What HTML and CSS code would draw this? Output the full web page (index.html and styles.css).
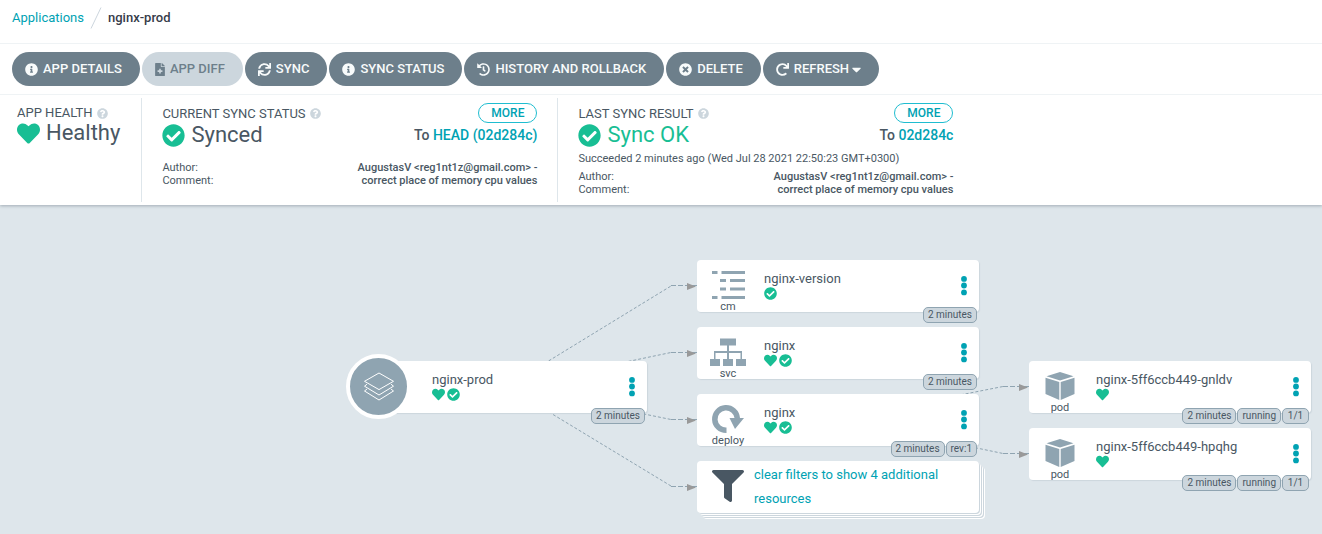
FILE: index.html
```html
<!DOCTYPE html>
<html lang="en">
<head>
<meta charset="utf-8">
<title>nginx-prod</title>
<link rel="stylesheet" href="styles.css">
</head>
<body>
<svg class="sprite" aria-hidden="true">
  <symbol id="info" viewBox="0 0 512 512"><path d="M256 8C119.043 8 8 119.083 8 256c0 136.997 111.043 248 248 248s248-111.003 248-248C504 119.083 392.957 8 256 8zm0 110c23.196 0 42 18.804 42 42s-18.804 42-42 42-42-18.804-42-42 18.804-42 42-42zm56 254c0 6.627-5.373 12-12 12h-88c-6.627 0-12-5.373-12-12v-24c0-6.627 5.373-12 12-12h12v-64h-12c-6.627 0-12-5.373-12-12v-24c0-6.627 5.373-12 12-12h64c6.627 0 12 5.373 12 12v100h12c6.627 0 12 5.373 12 12v24z"/></symbol>
  <symbol id="check" viewBox="0 0 512 512"><path d="M504 256c0 136.967-111.033 248-248 248S8 392.967 8 256 119.033 8 256 8s248 111.033 248 248zM227.314 387.314l184-184c6.248-6.248 6.248-16.379 0-22.627l-22.627-22.627c-6.248-6.249-16.379-6.249-22.628 0L216 308.118l-70.059-70.059c-6.248-6.248-16.379-6.248-22.628 0l-22.627 22.627c-6.248 6.248-6.248 16.379 0 22.627l104 104c6.249 6.249 16.379 6.249 22.628.001z"/></symbol>
  <symbol id="heart" viewBox="0 0 512 512"><path d="M462.3 62.6C407.5 15.9 326 24.3 275.7 76.2L256 96.5l-19.7-20.3C186.1 24.3 104.5 15.9 49.7 62.6c-62.8 53.6-66.1 149.8-9.9 207.9l193.5 199.8c12.5 12.9 32.8 12.9 45.3 0l193.5-199.8c56.3-58.1 53-154.3-9.8-207.9z"/></symbol>
  <symbol id="times" viewBox="0 0 512 512"><path d="M256 8C119 8 8 119 8 256s111 248 248 248 248-111 248-248S393 8 256 8zm121.6 313.1c4.7 4.7 4.7 12.3 0 17L338 377.6c-4.7 4.7-12.3 4.7-17 0L256 312l-65.1 65.6c-4.7 4.7-12.3 4.7-17 0L134.4 338c-4.7-4.7-4.7-12.3 0-17l65.6-65-65.6-65.1c-4.7-4.7-4.7-12.3 0-17l39.6-39.6c4.7-4.7 12.3-4.7 17 0l65 65.7 65.1-65.6c4.7-4.7 12.3-4.7 17 0l39.6 39.6c4.7 4.7 4.7 12.3 0 17L312 256l65.6 65.1z"/></symbol>
  <symbol id="filter" viewBox="0 0 512 512"><path d="M487.976 0H24.028C2.71 0-8.047 25.866 7.058 40.971L192 225.941V432c0 7.831 3.821 15.17 10.237 19.662l80 55.98C298.02 518.69 320 507.493 320 487.98V225.941l184.947-184.97C520.021 25.896 509.338 0 487.976 0z"/></symbol>
  <symbol id="question" viewBox="0 0 512 512"><path d="M504 256c0 136.997-111.043 248-248 248S8 392.997 8 256C8 119.083 119.043 8 256 8s248 111.083 248 248zM262.655 90c-54.497 0-89.255 22.957-116.549 63.758-3.536 5.286-2.353 12.415 2.715 16.258l34.699 26.31c5.205 3.947 12.621 3.008 16.665-2.122 17.864-22.658 30.113-35.797 57.303-35.797 20.429 0 45.698 13.148 45.698 32.958 0 14.976-12.363 22.667-32.534 33.976C247.128 238.528 216 254.941 216 296v4c0 6.627 5.373 12 12 12h56c6.627 0 12-5.373 12-12v-1.333c0-28.462 83.186-29.647 83.186-106.667 0-58.002-60.165-102-116.531-102zM256 338c-25.365 0-46 20.635-46 46 0 25.364 20.635 46 46 46s46-20.636 46-46c0-25.365-20.635-46-46-46z"/></symbol>
  <symbol id="redo" viewBox="0 0 512 512"><path d="M500.33 0h-47.41a12 12 0 0 0-12 12.57l4 82.76A247.42 247.42 0 0 0 256 8C119.34 8 7.9 119.53 8 256.19 8.1 393.07 119.1 504 256 504a247.1 247.1 0 0 0 166.18-63.91 12 12 0 0 0 .48-17.43l-34-34a12 12 0 0 0-16.38-.55A176 176 0 1 1 402.1 157.8l-101.53-4.87a12 12 0 0 0-12.57 12v47.41a12 12 0 0 0 12 12h200.33a12 12 0 0 0 12-12V12a12 12 0 0 0-12-12z"/></symbol>
  <symbol id="sync" viewBox="0 0 512 512"><path d="M440.65 12.57l4 82.77A247.16 247.16 0 0 0 255.83 8C134.73 8 33.91 94.92 12.29 209.82A12 12 0 0 0 24.09 224h49.05a12 12 0 0 0 11.67-9.26 175.91 175.91 0 0 1 317-56.94l-101.46-4.86a12 12 0 0 0-12.57 12v47.41a12 12 0 0 0 12 12H500a12 12 0 0 0 12-12V12a12 12 0 0 0-12-12h-47.37a12 12 0 0 0-11.98 12.57zM255.83 432a175.61 175.61 0 0 1-146-77.8l101.8 4.87a12 12 0 0 0 12.57-12v-47.4a12 12 0 0 0-12-12H12a12 12 0 0 0-12 12V500a12 12 0 0 0 12 12h47.35a12 12 0 0 0 12-12.6l-4.15-82.57A247.17 247.17 0 0 0 255.83 504c121.11 0 221.93-86.92 243.55-201.82a12 12 0 0 0-11.8-14.18h-49.05a12 12 0 0 0-11.67 9.26A175.86 175.86 0 0 1 255.83 432z"/></symbol>
  <symbol id="history" viewBox="0 0 512 512"><path d="M504 255.531c.253 136.64-111.18 248.372-247.82 248.468-59.015.042-113.223-20.53-155.822-54.911-11.077-8.94-11.905-25.541-1.839-35.607l11.267-11.267c8.609-8.609 22.353-9.551 31.891-1.984C173.062 425.135 212.781 440 256 440c101.705 0 184-82.311 184-184 0-101.705-82.311-184-184-184-48.814 0-93.149 18.969-126.068 49.932l50.754 50.754c10.08 10.08 2.941 27.314-11.313 27.314H24c-8.837 0-16-7.163-16-16V38.627c0-14.254 17.234-21.393 27.314-11.314l49.372 49.372C129.209 34.136 189.552 8 256 8c136.81 0 247.747 110.78 248 247.531zm-180.912 78.784l9.823-12.63c8.138-10.463 6.253-25.542-4.21-33.679L288 256.349V152c0-13.255-10.745-24-24-24h-16c-13.255 0-24 10.745-24 24v135.651l65.409 50.874c10.463 8.137 25.541 6.253 33.679-4.21z"/></symbol>
  <symbol id="file" viewBox="0 0 384 512"><path d="M377 105L279.1 7c-4.5-4.5-10.6-7-17-7H256v128h128v-6.1c0-6.3-2.5-12.4-7-16.9zm-153 31V0H24C10.7 0 0 10.7 0 24v464c0 13.3 10.7 24 24 24h336c13.3 0 24-10.7 24-24V160H248c-13.2 0-24-10.8-24-24zm64 160v48c0 4.4-3.6 8-8 8h-56v56c0 4.4-3.6 8-8 8h-48c-4.4 0-8-3.6-8-8v-56h-56c-4.4 0-8-3.6-8-8v-48c0-4.4 3.6-8 8-8h56v-56c0-4.4 3.6-8 8-8h48c4.4 0 8 3.6 8 8v56h56c4.4 0 8 3.6 8 8z"/></symbol>
  <symbol id="caret" viewBox="0 0 320 512"><path d="M31.3 192h257.3c17.8 0 26.7 21.5 14.1 34.1L174.1 354.8c-7.8 7.8-20.5 7.8-28.3 0L17.2 226.1C4.6 213.5 13.5 192 31.3 192z"/></symbol>
  <symbol id="dots" viewBox="0 0 6 20"><circle cx="3" cy="2.9" r="2.9"/><circle cx="3" cy="9.5" r="2.9"/><circle cx="3" cy="16.4" r="2.9"/></symbol>
  <symbol id="pod" viewBox="0 0 36 34"><path d="M18 4L31.5 8.200 18 12.500 4.500 8.200zM3.500 9.700L17.300 14V32L3.500 26zM32.500 9.700L18.700 14V32L32.500 26z"/></symbol>
</svg>

<header class="header">
  <nav class="breadcrumb" aria-label="Breadcrumb">
    <a class="link" href="#">Applications</a>
    <svg class="slash" viewBox="0 0 12 22" aria-hidden="true"><path d="M1 21.5L11 .5"/></svg>
    <span class="current">nginx-prod</span>
  </nav>
  <div class="toolbar">
    <button class="btn"><svg class="icon"><use href="#info"/></svg>App details</button>
    <button class="btn" disabled><svg class="icon narrow"><use href="#file"/></svg>App diff</button>
    <button class="btn"><svg class="icon"><use href="#sync"/></svg>Sync</button>
    <button class="btn"><svg class="icon"><use href="#info"/></svg>Sync status</button>
    <button class="btn"><svg class="icon"><use href="#history"/></svg>History and rollback</button>
    <button class="btn"><svg class="icon"><use href="#times"/></svg>Delete</button>
    <button class="btn"><svg class="icon"><use href="#redo"/></svg>Refresh<svg class="icon caret"><use href="#caret"/></svg></button>
  </div>
  <div class="summary">
    <section class="panel health">
      <div class="label">App health <svg class="help"><use href="#question"/></svg></div>
      <div class="status"><svg class="state"><use href="#heart"/></svg>Healthy</div>
    </section>
    <section class="panel wide">
      <div class="row">
        <div class="label">Current sync status <svg class="help"><use href="#question"/></svg></div>
        <button class="more">More</button>
      </div>
      <div class="row">
        <div class="status"><svg class="state"><use href="#check"/></svg>Synced</div>
        <div class="revision">To <a class="link" href="#">HEAD (02d284c)</a></div>
      </div>
      <div class="note"></div>
      <dl class="commit">
        <div class="row"><dt>Author:</dt><dd>AugustasV &lt;reg1nt1z@gmail.com&gt; -</dd></div>
        <div class="row"><dt>Comment:</dt><dd>correct place of memory cpu values</dd></div>
      </dl>
    </section>
    <section class="panel wide">
      <div class="row">
        <div class="label">Last sync result <svg class="help"><use href="#question"/></svg></div>
        <button class="more">More</button>
      </div>
      <div class="row">
        <div class="status ok"><svg class="state"><use href="#check"/></svg>Sync OK</div>
        <div class="revision">To <a class="link" href="#">02d284c</a></div>
      </div>
      <div class="note result">Succeeded 2 minutes ago (Wed Jul 28 2021 22:50:23 GMT+0300)</div>
      <dl class="commit">
        <div class="row"><dt>Author:</dt><dd>AugustasV &lt;reg1nt1z@gmail.com&gt; -</dd></div>
        <div class="row"><dt>Comment:</dt><dd>correct place of memory cpu values</dd></div>
      </dl>
    </section>
  </div>
</header>

<main class="canvas">
  <svg class="edges" aria-hidden="true">
    <g class="lines">
      <path d="M506 182L671 81M506 182L671 147.500M506 181L671 214.500M506 181L671 281M838 214L1003 181.500M838 214L1003 248.500"/>
      <path class="flat" d="M671 80.500H697M671 147.500H697M671 214.500H697M671 281.500H697M1003 181.500H1029M1003 248.500H1029"/>
    </g>
    <path class="arrows" d="M687 78l9 3.500-9 3.500zM687 145l9 3.500-9 3.500zM687 212l9 3.500-9 3.500zM687 279l9 3.500-9 3.500zM1019 179l9 3.500-9 3.500zM1019 246l9 3.500-9 3.500z"/>
  </svg>

  <article class="node app">
    <div class="app-icon"><svg viewBox="0 0 30 30"><path d="M15 1L29.500 9.300 15 17.600 .5 9.300zM3 12.200L.5 14.200 15 23 29.500 14.200 27 12.200M3 17L.5 19 15 28 29.500 19 27 17"/></svg></div>
    <div class="kind"></div>
    <div class="body"><div class="name">nginx-prod</div><div class="states"><svg><use href="#heart"/></svg><svg><use href="#check"/></svg></div></div>
    <button class="menu" aria-label="Actions for nginx-prod"><svg><use href="#dots"/></svg></button>
    <div class="tags"><span>2 minutes</span></div>
  </article>

  <article class="node cm">
    <div class="kind"><svg viewBox="0 0 36 34"><path d="M2 4h5.500v3H2zM11.500 4H35v3H11.500zM10 12h6v3h-6zM20 12h15v3H20zM10 20.500h6v3h-6zM20 20.500h15v3H20zM2 29h5.500v3H2zM11.500 29H35v3H11.500z"/></svg>cm</div>
    <div class="body"><div class="name">nginx-version</div><div class="states"><svg><use href="#check"/></svg></div></div>
    <button class="menu" aria-label="Actions for nginx-version"><svg><use href="#dots"/></svg></button>
    <div class="tags"><span>2 minutes</span></div>
  </article>

  <article class="node svc">
    <div class="kind"><svg viewBox="0 0 36 34"><path d="M10 4.500h16V11.500h-7v5.500h13v8h4v7H26v-7h4.500v-6H19v6h4v7H13v-7h4v-6H5.500v6H10v7H0v-7h4v-8h13v-5.500h-7z"/></svg>svc</div>
    <div class="body"><div class="name">nginx</div><div class="states"><svg><use href="#heart"/></svg><svg><use href="#check"/></svg></div></div>
    <button class="menu" aria-label="Actions for service nginx"><svg><use href="#dots"/></svg></button>
    <div class="tags"><span>2 minutes</span></div>
  </article>

  <article class="node deploy">
    <div class="kind"><svg viewBox="0 0 36 34"><path d="M16.500 32A14 14 0 1 1 30 17h4L25 28 19.500 17h5A8.500 8.500 0 1 0 16.500 26.500z"/></svg>deploy</div>
    <div class="body"><div class="name">nginx</div><div class="states"><svg><use href="#heart"/></svg><svg><use href="#check"/></svg></div></div>
    <button class="menu" aria-label="Actions for deployment nginx"><svg><use href="#dots"/></svg></button>
    <div class="tags"><span>2 minutes</span><span>rev:1</span></div>
  </article>

  <article class="node filtered">
    <svg class="funnel"><use href="#filter"/></svg>
    <a class="link" href="#">clear filters to show 4 additional resources</a>
  </article>

  <article class="node pod-a">
    <div class="kind"><svg><use href="#pod"/></svg>pod</div>
    <div class="body"><div class="name">nginx-5ff6ccb449-gnldv</div><div class="states"><svg><use href="#heart"/></svg></div></div>
    <button class="menu" aria-label="Actions for nginx-5ff6ccb449-gnldv"><svg><use href="#dots"/></svg></button>
    <div class="tags"><span>2 minutes</span><span>running</span><span>1/1</span></div>
  </article>

  <article class="node pod-b">
    <div class="kind"><svg><use href="#pod"/></svg>pod</div>
    <div class="body"><div class="name">nginx-5ff6ccb449-hpqhg</div><div class="states"><svg><use href="#heart"/></svg></div></div>
    <button class="menu" aria-label="Actions for nginx-5ff6ccb449-hpqhg"><svg><use href="#dots"/></svg></button>
    <div class="tags"><span>2 minutes</span><span>running</span><span>1/1</span></div>
  </article>
</main>
</body>
</html>
```

FILE: styles.css
```css
* { box-sizing: border-box; }

body {
  margin: 0;
  min-height: 100vh;
  display: flex;
  flex-direction: column;
  background: #dee6eb;
  color: #495763;
  font: 13px/18px Roboto, sans-serif;
}

button { font: inherit; cursor: pointer; }
svg { display: block; flex: none; fill: currentColor; }
.sprite { position: absolute; width: 0; height: 0; }
.link { color: #00a2b3; text-decoration: none; }

/* Header */
.header {
  position: relative;
  z-index: 1;
  background: #fff;
  box-shadow: 0 1px 3px rgba(73, 87, 99, 0.4);
}
.breadcrumb {
  display: flex;
  align-items: center;
  height: 43px;
  padding: 0 12px 7px;
}
.slash {
  width: 12px;
  height: 22px;
  margin: 0 6px;
  fill: none;
  stroke: #ccd6dd;
}
.current { color: #363c4a; font-weight: 500; }

.toolbar {
  display: flex;
  flex-wrap: wrap;
  gap: 2px;
  padding: 8px 12px;
  border: solid #eff3f5;
  border-width: 1px 0;
}
.btn {
  display: flex;
  align-items: center;
  height: 34px;
  padding: 0 18px 0 13px;
  border: 0;
  border-radius: 17px;
  background: #6d7f8b;
  color: #f8fbfb;
  font-weight: 500;
  text-transform: uppercase;
}
.btn:disabled { background: #ccd6dd; color: #6d7f8b; }
.icon { width: 13px; height: 13px; margin-right: 5px; }
.icon.narrow { width: 10px; }
.icon.caret { width: 9px; height: 15px; margin: 0 0 0 3px; }

/* Summary */
.summary { display: flex; padding: 3px 0; }
.panel { min-height: 104px; }
.panel + .panel { border-left: 1px solid #dee6eb; }
.health { padding: 6px 21px 0 17px; }
.wide { flex: 0 1 416px; padding: 5px 20px 0; }
.row { display: flex; justify-content: space-between; }
.label {
  display: flex;
  align-items: center;
  gap: 4px;
  height: 18px;
  text-transform: uppercase;
}
.wide .label { height: 21px; }
.help { width: 11px; height: 11px; color: #ccd6dd; }
.status {
  display: flex;
  align-items: center;
  gap: 6px;
  height: 22px;
  font-size: 22px;
  line-height: 22px;
}
.state { width: 23px; height: 23px; color: #18be94; }
.ok { color: #18be94; }
.more {
  height: 20px;
  padding: 0 12px;
  border: 1px solid #1fbdd0;
  border-radius: 10px;
  background: none;
  color: #00a2b3;
  font-size: 12px;
  font-weight: 500;
  line-height: 18px;
  text-transform: uppercase;
}
.revision { font-size: 14px; line-height: 22px; font-weight: 500; }
.note { height: 15px; font-size: 11px; line-height: 26px; }
.note.result { height: 24px; }
.commit { margin: 0; font-size: 11px; line-height: 13px; }
.commit dd { margin: 0; font-weight: 500; text-align: right; }

/* Resource tree */
.canvas { position: relative; flex: 1; min-height: 329px; }
.edges { position: absolute; inset: 0; width: 100%; height: 100%; }
.lines { fill: none; stroke: #8fa4b1; stroke-dasharray: 3 2; stroke-width: 1; }
.flat { stroke-dasharray: 5 2; }
.arrows { fill: #999; }

.node {
  position: absolute;
  display: flex;
  width: 282px;
  height: 52px;
  border-radius: 4px;
  background: #fff;
  box-shadow: 1px 1px 1px #ccd6dd;
}
.app { left: 365px; top: 156px; }
.cm { left: 697px; top: 55px; }
.svc { left: 697px; top: 122px; }
.deploy { left: 697px; top: 189px; }
.filtered { left: 697px; top: 256px; }
.pod-a { left: 1029px; top: 156px; }
.pod-b { left: 1029px; top: 223px; }

.app-icon {
  position: absolute;
  left: -19px;
  top: -7px;
  display: grid;
  place-items: center;
  width: 65px;
  height: 65px;
  border: 4px solid #fff;
  border-radius: 50%;
  background: #8fa4b1;
}
.app-icon svg { width: 30px; height: 30px; fill: none; stroke: #fff; }

.kind {
  display: flex;
  flex-direction: column;
  align-items: center;
  width: 62px;
  padding-top: 7px;
  font-size: 11px;
  line-height: 12px;
}
.kind svg { width: 36px; height: 34px; color: #8fa4b1; }
.body { flex: 1; padding: 10px 0 0 5px; }
.name { white-space: nowrap; }
.states { display: flex; gap: 2px; margin-top: -1px; color: #18be94; }
.states svg { width: 13px; height: 13px; }
.menu {
  align-self: center;
  width: 30px;
  padding: 0 12px;
  border: 0;
  background: none;
  color: #00a2b3;
}
.menu svg { width: 6px; height: 20px; }
.tags {
  position: absolute;
  right: 2px;
  bottom: -11px;
  display: flex;
  gap: 1px;
}
.tags span {
  min-width: 27px;
  height: 16px;
  padding: 0 4px;
  border: 1px solid #8fa4b1;
  border-radius: 5px;
  background: #ccd6dd;
  font-size: 10px;
  line-height: 14px;
  text-align: center;
}

.filtered {
  gap: 10px;
  padding: 2px 30px 0 15px;
  line-height: 24px;
  box-shadow: 1px 1px 0 #ccd6dd, 2px 2px 0 #fff, 3px 3px 0 #ccd6dd,
    4px 4px 0 #fff, 5px 5px 0 #ccd6dd, 6px 6px 0 #fff;
}
.funnel { width: 32px; height: 32px; margin-top: 7px; }
```
